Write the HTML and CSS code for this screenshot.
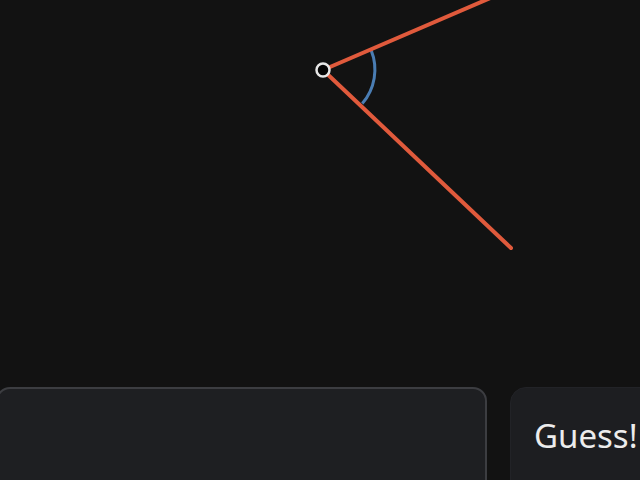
FILE: index.html
```html
<!DOCTYPE html>
<html lang="en">
<head>
  <meta charset="UTF-8" />
  <meta name="viewport" content="width=device-width, initial-scale=1.0"/>
  <title>Guess the Angle</title>
  <link rel="stylesheet" href="styles.css">
</head>
<body>
  <div class="stage">
    <svg class="canvas" width="640" height="387" viewBox="0 0 640 387">
      <path class="arc" d="M371.2 50.4 A52 52 0 0 1 362.3 103.6" />
      <line class="ray" x1="323" y1="70" x2="495" y2="-4" />
      <line class="ray" x1="323" y1="70" x2="511" y2="248" />
      <circle class="vertex" cx="323" cy="70" r="6.5" />
    </svg>
  </div>

  <div class="controls-wrap">
    <form class="controls" onsubmit="return false">
      <input type="text" id="guessInput" class="guess-input" autocomplete="off">
      <button type="submit" id="guessBtn" class="guess-btn">Guess!</button>
    </form>
  </div>
</body>
</html>
```

FILE: styles.css
```css
body {
  background-color: #121212;
  margin: 0;
  overflow: hidden;
  font-family: 'Noto Sans', 'Open Sans', sans-serif;
}

.stage {
  height: 387px;
}

.canvas {
  display: block;
}

.ray {
  stroke: #e05a3c;
  stroke-width: 4;
  stroke-linecap: round;
}

.arc {
  fill: none;
  stroke: #4a7db3;
  stroke-width: 3;
}

.vertex {
  fill: #050505;
  stroke: #e6e6e6;
  stroke-width: 2.5;
}

.controls-wrap {
  width: 640px;
  height: 93px;
  overflow: hidden;
}

.controls {
  display: flex;
  gap: 23px;
  margin-left: -4px;
}

.guess-input {
  flex: 0 0 491px;
  height: 110px;
  box-sizing: border-box;
  background-color: #1e1f22;
  border: 2px solid #3c3d41;
  border-radius: 14px;
  color: #e8e8e8;
  font-size: 30px;
  padding: 0 16px;
  outline: none;
}

.guess-btn {
  flex: 0 0 180px;
  height: 110px;
  box-sizing: border-box;
  background-color: #1d1e21;
  border: 1px solid #222327;
  border-radius: 16px;
  color: #ececec;
  font-family: 'Noto Sans', 'Open Sans', sans-serif;
  font-size: 33px;
  text-align: left;
  padding: 0 0 14px 23px;
  cursor: pointer;
}
```
